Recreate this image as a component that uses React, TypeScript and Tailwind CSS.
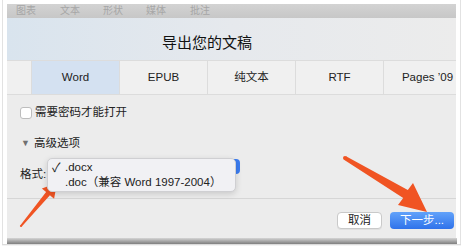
const font = { fontFamily: '"Liberation Sans", "Noto Sans CJK SC", sans-serif' }

function Tab({ label, active }: { label: string; active?: boolean }) {
  return (
    <div
      className={[
        'flex h-full w-[88px] shrink-0 items-center justify-center border-r border-[#dcdcdc] text-[11.5px] text-[#222]',
        active ? 'bg-[#d4e1f1]' : '',
      ].join(' ')}
    >
      {label}
    </div>
  )
}

function Arrows() {
  return (
    <svg className="pointer-events-none absolute left-0 top-0" width="463" height="251" viewBox="0 0 463 251">
      <g fill="#f05423">
        <polygon points="20.2,225.4 46.1,192.1 41.9,188.6 57,183 54.1,198.8 49.9,195.3 21.8,226.6" />
        <circle cx="21" cy="226" r="1.1" />
        <polygon points="346,156.3 407.8,190.1 413,183 427,212 398,205 403.2,197.9 344,159.7" />
        <circle cx="345" cy="158" r="2" />
      </g>
    </svg>
  )
}

export default function App() {
  return (
    <div className="relative h-[251px] w-[463px] overflow-hidden bg-white px-[2px]" style={font}>
      <div className="flex h-[244px] flex-col border-x border-[#e2e2e2] pl-[4px] pr-[3px] pt-[4px]">
        <div className="flex w-[449px] flex-1 flex-col overflow-hidden">
          {/* toolbar strip */}
          <div className="flex h-[14px] shrink-0 items-center bg-gradient-to-b from-[#d3d3d3] to-[#c7c7c7] pl-[9px] text-[10px] leading-none text-[#a6a6a6]">
            <span className="w-[44px]">图表</span>
            <span className="w-[43px]">文本</span>
            <span className="w-[43px]">形状</span>
            <span className="w-[44px]">媒体</span>
            <span>批注</span>
          </div>

          {/* title */}
          <div className="h-[42px] shrink-0 bg-gradient-to-r from-[#d9e4ee] via-[#e6e9ed] to-[#ececec] pl-[155px] pt-[15px] text-[15px] leading-[20px] text-[#111]">
            导出您的文稿
          </div>

          {/* tabs */}
          <div className="flex h-[35px] shrink-0 border-y border-[#dcdcdc] bg-[#f0f0f0]">
            <div className="h-full w-[25px] shrink-0 border-r border-[#dcdcdc]" />
            <Tab label="Word" active />
            <Tab label="EPUB" />
            <Tab label="纯文本" />
            <Tab label="RTF" />
            <Tab label="Pages ’09" />
          </div>

          {/* options */}
          <div className="flex h-[103px] shrink-0 flex-col bg-[#ececec] pl-[13px] text-[11.5px] text-[#222]">
            <div className="mt-[11px] flex h-[14px] items-center gap-[3px]">
              <div className="h-[12px] w-[12px] rounded-[3px] border border-[#bdbdbd] bg-white" />
              <span>需要密码才能打开</span>
            </div>
            <div className="mt-[17px] flex h-[14px] items-center gap-[4px]">
              <span className="ml-[1px] text-[9px] text-[#707070]">▼</span>
              <span>高级选项</span>
            </div>
            <div className="relative mt-[16px] flex h-[16px] items-center">
              <span>格式:</span>
              <div className="absolute left-[214px] top-[-8px] h-[15px] w-[6px] rounded-r-[4px] bg-[#3b7cf0]" />
              <div className="absolute left-[27px] top-[-9px] z-10 flex h-[34px] w-[189px] flex-col rounded-[5px] border border-[#cfcfd2] bg-[#f1f1f4] pt-[2px] shadow-[0_2px_6px_rgba(0,0,0,0.15)]">
                <div className="flex h-[14px] items-center">
                  <span className="w-[17px] pl-[4px] text-[12.5px] leading-none text-[#222]">✓</span>
                  <span>.docx</span>
                </div>
                <div className="flex h-[15px] items-center pl-[17px]">.doc（兼容 Word 1997-2004）</div>
              </div>
            </div>
          </div>

          {/* footer buttons */}
          <div className="flex flex-1 items-start justify-end gap-[8px] border-t border-[#d6d6d6] bg-[#ececec] pr-[2px] pt-[13px] text-[11.5px]">
            <div className="flex h-[17px] w-[45px] items-center justify-center rounded-[4px] border border-[#c9c9c9] bg-white text-[#222] shadow-[0_1px_0_rgba(0,0,0,0.05)]">
              取消
            </div>
            <div className="flex h-[17px] w-[64px] items-center justify-center rounded-[4px] bg-gradient-to-b from-[#62a2fa] to-[#2f72ea] text-white">
              下一步...
            </div>
          </div>
        </div>
        {/* bottom shadow */}
        <div className="h-[6px] shrink-0 bg-gradient-to-b from-[#d5d5d5] to-[#7f7f7f]" />
      </div>
      <div className="h-[2px] bg-gradient-to-b from-[#cfcfcf] to-white" />
      <Arrows />
    </div>
  )
}
